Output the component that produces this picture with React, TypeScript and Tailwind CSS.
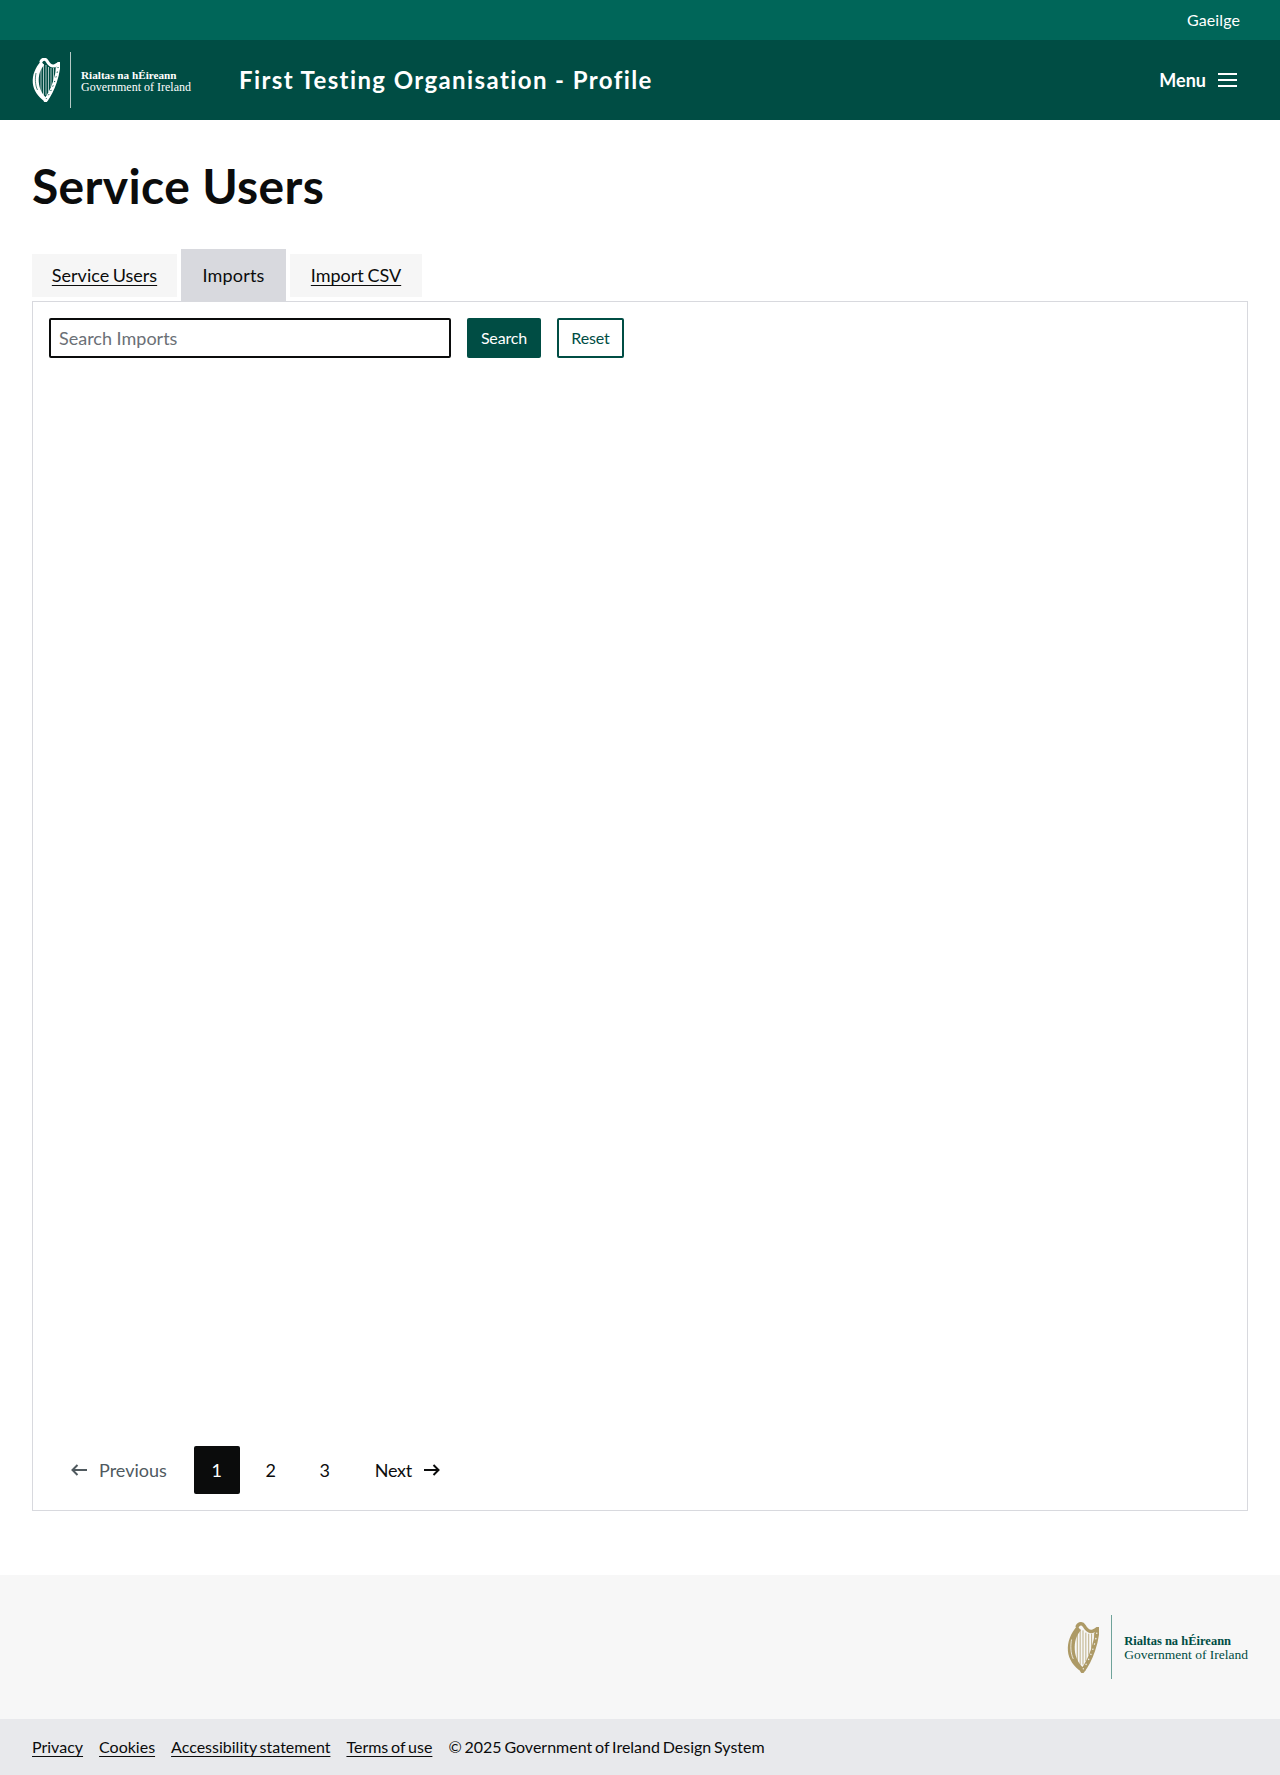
import React from 'react';

const Harp = ({ color, bg, className }: { color: string; bg: string; className: string }) => (
  <svg viewBox="0 0 28 44" className={className}>
    {/* strings */}
    <path d="M9 9 V34 M11.5 6 V37 M14 7 V37 M16.5 9 V34 M19 10 V29 M21.5 10 V23 M24 9 V16" stroke={color} strokeWidth="0.8" fill="none" opacity="0.85" />
    {/* pillar */}
    <path d="M9 3 C3 10 0.3 17 0.8 25 C1.3 32 6 39 13 43.5 L16.5 42 C10.5 37 7.2 31 6.8 24 C6.5 17 8 12 12 7 Z" fill={color} />
    <path d="M4 15 C3 20 3 27 5.5 32" stroke={bg} strokeWidth="0.7" fill="none" />
    {/* neck */}
    <path d="M9 3.5 C10.5 0.5 13.5 0.5 15 3 C16.5 5.8 18.5 8.2 21.5 8 C23.5 7.8 25 6 27.5 5.5" stroke={color} strokeWidth="3" fill="none" strokeLinecap="round" />
    {/* forearm with knotwork */}
    <path d="M26.6 6 C25.8 17 21.5 32 13.5 42.5" stroke={color} strokeWidth="3.8" fill="none" strokeLinecap="round" />
    <path d="M26.1 9 C25 18 21 31 14 41" stroke={bg} strokeWidth="1" strokeDasharray="1.2 3.6" fill="none" />
  </svg>
);

const Logo = ({ footer }: { footer?: boolean }) => {
  const harpColor = footer ? '#ad9a66' : '#ffffff';
  const bg = footer ? '#f7f7f7' : '#004d44';
  const textColor = footer ? 'text-[#004d44]' : 'text-white';
  return (
    <div className="flex items-center">
      <Harp color={harpColor} bg={bg} className={footer ? 'w-[32px] h-[51px]' : 'w-[28px] h-[44px]'} />
      <div className={footer ? 'w-px h-[64px] ml-[12px] bg-[#6fa39a]' : 'w-px h-[56px] ml-[10px] bg-[#b5c9c5]'} />
      <div className={`font-['Liberation_Serif',serif] ${textColor} ${footer ? 'ml-[12px] text-[13.5px] leading-[14px] pt-[1px]' : 'ml-[10px] text-[12px] leading-[12px] pt-[2px]'}`}>
        <div className={`font-bold whitespace-nowrap ${footer ? 'text-[12.5px]' : 'text-[11.2px]'}`}>Rialtas na hÉireann</div>
        <div className="whitespace-nowrap">Government of Ireland</div>
      </div>
    </div>
  );
};

const ArrowLeftIcon = () => (
  <svg viewBox="0 0 16 12" className="w-[16px] h-[12px]" fill="none" stroke="#505a5f" strokeWidth="2">
    <path d="M16 6 H1.5 M6.5 1 L1.5 6 L6.5 11" />
  </svg>
);

const ArrowRightIcon = () => (
  <svg viewBox="0 0 16 12" className="w-[16px] h-[12px]" fill="none" stroke="#0b0c0c" strokeWidth="2">
    <path d="M0 6 H14.5 M9.5 1 L14.5 6 L9.5 11" />
  </svg>
);

const MenuIcon = () => (
  <svg viewBox="0 0 19 14" className="w-[19px] h-[14px]" fill="#ffffff">
    <rect x="0" y="0" width="19" height="2" />
    <rect x="0" y="6" width="19" height="2" />
    <rect x="0" y="12" width="19" height="2" />
  </svg>
);

const FooterLink = ({ children }: { children: React.ReactNode }) => (
  <a href="#" className="underline underline-offset-[3px] decoration-1">{children}</a>
);

export default function App() {
  return (
    <div className="min-h-[1775px] flex flex-col bg-white text-[#0b0c0c] font-['Lato',sans-serif]">
      <div className="h-[40px] bg-[#006659] flex items-center justify-end pr-[40px] text-white">
        <a href="#" className="text-[16px] tracking-[0.1px]">Gaeilge</a>
      </div>
      <header className="h-[80px] bg-[#004d44] flex items-center justify-between pl-[32px] pr-[43px] text-white">
        <div className="flex items-center">
          <Logo />
          <span className="ml-[48px] text-[24px] font-bold tracking-[1.4px]">First Testing Organisation - Profile</span>
        </div>
        <button className="flex items-center gap-[12px] text-[18px] font-bold">
          Menu
          <MenuIcon />
        </button>
      </header>

      <main className="px-[32px] pt-[36px] pb-[64px]">
        <h1 className="text-[48px] font-bold leading-[60px] tracking-[0.35px]">Service Users</h1>

        <div className="mt-[33px] flex items-end gap-[4px] h-[52px] text-[18px] [word-spacing:-1px]">
          <a href="#" className="w-[145px] h-[43px] mb-[4px] flex items-center justify-center bg-[#f6f6f6] underline underline-offset-[3px]">Service Users</a>
          <span className="relative w-[105px] h-[53px] -mb-px flex items-center justify-center bg-[#d8d9de] tracking-[0.2px]">Imports</span>
          <a href="#" className="w-[132px] h-[43px] mb-[4px] flex items-center justify-center bg-[#f6f6f6] underline underline-offset-[3px]">Import CSV</a>
        </div>

        <section className="h-[1210px] border border-[#d8d9de] p-[16px] flex flex-col justify-between">
          <div className="flex gap-[16px]">
            <input
              placeholder="Search Imports"
              className="w-[402px] h-[40px] border-2 border-[#0b0c0c] rounded-[2px] px-[8px] text-[18px] placeholder:text-[#6b7076] outline-none"
            />
            <button className="w-[74px] h-[40px] bg-[#004d44] text-white text-[16px] tracking-[-0.15px] rounded-[2px]">Search</button>
            <button className="w-[67px] h-[40px] border-2 border-[#004d44] text-[#004d44] text-[16px] tracking-[-0.15px] rounded-[2px]">Reset</button>
          </div>

          <nav className="flex items-center gap-[8px] h-[48px] text-[18px] leading-[26px]">
            <span className="flex items-center gap-[12px] pl-[22px] pr-[19px] pb-px text-[#505a5f]">
              <ArrowLeftIcon />
              Previous
            </span>
            <span className="w-[46px] h-[48px] flex items-center justify-center bg-[#0b0c0c] text-white rounded-[2px] pb-px">1</span>
            <span className="w-[46px] text-center pb-px">2</span>
            <span className="w-[46px] text-center pb-px">3</span>
            <span className="flex items-center gap-[12px] pl-[19px] pb-px tracking-[-0.3px]">
              Next
              <ArrowRightIcon />
            </span>
          </nav>
        </section>
      </main>

      <div className="h-[144px] bg-[#f7f7f7] flex items-center justify-end px-[32px]">
        <Logo footer />
      </div>
      <footer className="flex-1 bg-[#e8e9ec] px-[32px] flex items-center gap-[16px] text-[16px] [word-spacing:-1.3px]">
        <FooterLink>Privacy</FooterLink>
        <FooterLink>Cookies</FooterLink>
        <FooterLink>Accessibility statement</FooterLink>
        <FooterLink>Terms of use</FooterLink>
        <span>© 2025 Government of Ireland Design System</span>
      </footer>
    </div>
  );
}
